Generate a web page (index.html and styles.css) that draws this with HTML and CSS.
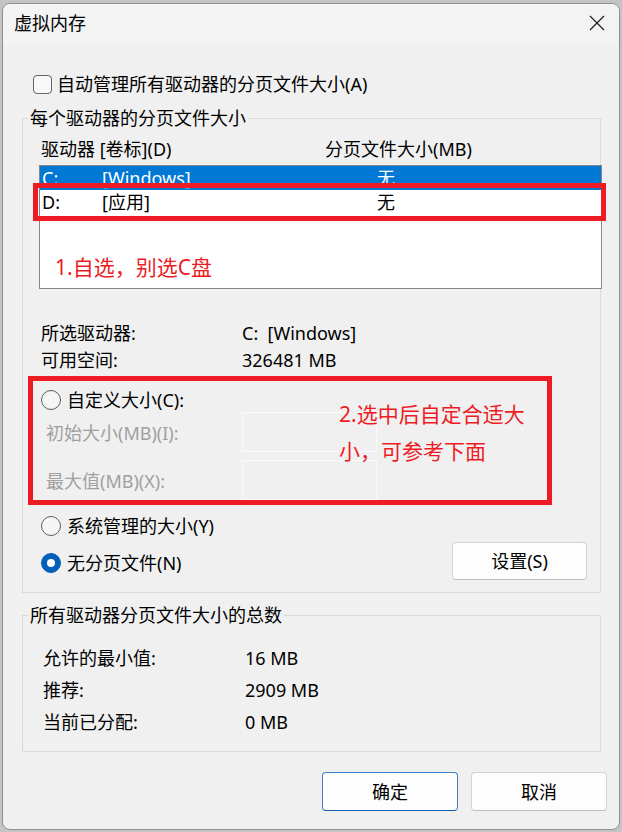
FILE: index.html
```html
<!DOCTYPE html>
<html lang="zh-CN">
<head>
<meta charset="utf-8">
<title>虚拟内存</title>
<link rel="stylesheet" href="styles.css">
</head>
<body>
<div class="window">
  <div class="titlebar">
    <span class="title">虚拟内存</span>
    <svg class="close" width="16" height="16" viewBox="0 0 16 16"><path d="M1 1L15 15M15 1L1 15" stroke="#1b1b1b" stroke-width="1.15" fill="none"/></svg>
  </div>
  <div class="content">
    <div class="check-row"><span class="checkbox"></span><span>自动管理所有驱动器的分页文件大小(A)</span></div>

    <fieldset class="group group-drives">
      <legend>每个驱动器的分页文件大小</legend>
      <div class="list-head"><span class="head-drive">驱动器 [卷标](D)</span><span>分页文件大小(MB)</span></div>
      <div class="listbox">
        <div class="list-row selected"><span class="c-drive">C:</span><span class="c-label">[Windows]</span><span>无</span></div>
        <div class="list-row"><span class="c-drive">D:</span><span class="c-label">[应用]</span><span>无</span></div>
        <div class="note note-1">1.自选，别选C盘</div>
        <div class="mark mark-row"></div>
      </div>
      <div class="info">
        <div class="info-row"><span class="info-label">所选驱动器:</span><span>C:&nbsp; [Windows]</span></div>
        <div class="info-row"><span class="info-label">可用空间:</span><span>326481 MB</span></div>
      </div>
      <div class="custom-box">
        <div class="radio-row inner"><span class="radio"></span><span>自定义大小(C):</span></div>
        <div class="field-row"><span class="field-label">初始大小(MB)(I):</span><span class="textbox"></span></div>
        <div class="field-row"><span class="field-label">最大值(MB)(X):</span><span class="textbox"></span></div>
        <div class="note note-2">2.选中后自定合适大<br>小，可参考下面</div>
      </div>
      <div class="radio-row sys"><span class="radio"></span><span>系统管理的大小(Y)</span></div>
      <div class="radio-line">
        <div class="radio-label"><span class="radio on"></span><span>无分页文件(N)</span></div>
        <button class="btn btn-set">设置(S)</button>
      </div>
    </fieldset>

    <fieldset class="group group-total">
      <legend>所有驱动器分页文件大小的总数</legend>
      <div class="totals">
        <div class="total-row"><span class="total-label">允许的最小值:</span><span>16 MB</span></div>
        <div class="total-row"><span class="total-label">推荐:</span><span>2909 MB</span></div>
        <div class="total-row"><span class="total-label">当前已分配:</span><span>0 MB</span></div>
      </div>
    </fieldset>

    <div class="actions">
      <button class="btn btn-primary">确定</button>
      <button class="btn">取消</button>
    </div>
  </div>
</div>
</body>
</html>
```

FILE: styles.css
```css
* { box-sizing: border-box; }
html, body { margin: 0; padding: 0; }
body {
  width: 622px;
  height: 832px;
  overflow: hidden;
  background: #c4c4c4;
  font-family: "Noto Sans", "Noto Sans CJK SC", sans-serif;
  font-size: 18px;
  color: #000;
}
.window {
  margin: 3px 0 0 2px;
  width: 618px;
  height: 827px;
  background: #f0f0f0;
  border: 1px solid #8f8f8f;
  border-radius: 8px;
  overflow: hidden;
}
.titlebar {
  height: 41px;
  background: #f3f3f3;
  display: flex;
  align-items: center;
  padding: 0 14px 4px 11px;
}
.title { line-height: 24px; }
.close { margin-left: auto; }

.check-row {
  display: flex;
  align-items: center;
  gap: 5px;
  height: 24px;
  line-height: 24px;
  margin-top: 27px;
  padding-left: 30px;
}
.checkbox {
  flex: none;
  width: 19px;
  height: 19px;
  border: 1px solid #646464;
  border-radius: 4px;
  background: #f8f8f8;
}

.group {
  margin: 0 0 0 19px;
  width: 579px;
  min-width: 0;
  padding: 0;
  border: 1px solid #dadada;
}
.group legend {
  margin-left: 5px;
  padding: 0 2px;
  line-height: 24px;
}
.group-drives { margin-top: 10px; padding-bottom: 12px; }
.group-total { margin-top: 10px; padding-bottom: 13px; }

.list-head {
  display: flex;
  margin-top: 7px;
  padding-left: 18px;
  line-height: 24px;
}
.head-drive { width: 284px; }

.listbox {
  position: relative;
  margin: 4px 0 0 16px;
  width: 563px;
  height: 124px;
  background: #fff;
  border: 1px solid #868686;
}
.list-row {
  display: flex;
  height: 24px;
  line-height: 24px;
  padding-left: 2px;
}
.list-row.selected { background: #0078d4; color: #fff; }
.c-drive { width: 60px; }
.c-label { width: 275px; }

.note {
  color: #ed1c24;
  font-size: 21px;
  white-space: nowrap;
}
.note-1 {
  margin-top: 39px;
  padding-left: 15px;
  line-height: 28px;
}
.note-2 {
  position: absolute;
  left: 306px;
  top: 15px;
  line-height: 37px;
}
.mark {
  position: absolute;
  border: 5px solid #ed1c24;
}
.mark-row {
  left: -7px;
  top: 17px;
  width: 573px;
  height: 38px;
}

.info { margin-top: 31px; }
.info-row {
  display: flex;
  line-height: 27px;
  padding-left: 18px;
}
.info-label { width: 201px; }

.custom-box {
  position: relative;
  margin: 2px 0 0 5px;
  width: 524px;
  height: 129px;
  padding-top: 7px;
  border: 5px solid #ed1c24;
}
.radio-row {
  display: flex;
  align-items: center;
  gap: 6px;
  height: 24px;
  line-height: 24px;
}
.radio-row.inner { padding-left: 8px; }
.radio-row.sys { margin-top: 9px; padding-left: 18px; }
.radio {
  flex: none;
  width: 20px;
  height: 20px;
  border-radius: 50%;
  border: 1px solid #5e5e5e;
  background: #f5f5f5;
}
.radio.on {
  background: #005fb8;
  border-color: #005fb8;
  display: flex;
  align-items: center;
  justify-content: center;
}
.radio.on::after {
  content: "";
  width: 8px;
  height: 8px;
  border-radius: 50%;
  background: #fff;
}

.field-row {
  display: flex;
  align-items: center;
  height: 40px;
  padding-left: 13px;
  color: #a0a0a0;
}
.field-row + .field-row { margin-top: 8px; }
.field-label { width: 196px; }
.textbox {
  width: 135px;
  height: 40px;
  border: 1px solid #fafafa;
  background: #f0f0f0;
}

.radio-line {
  display: flex;
  align-items: center;
  height: 38px;
  margin-top: 4px;
  padding: 0 13px 0 18px;
}
.radio-label {
  display: flex;
  align-items: center;
  gap: 6px;
  line-height: 24px;
  margin-top: 4px;
}

.btn {
  font: inherit;
  color: #000;
  background: #fdfdfd;
  border: 1px solid #d3d3d3;
  border-bottom-color: #bdbdbd;
  border-radius: 4px;
  padding: 0;
  line-height: 24px;
}
.btn-set {
  margin-left: auto;
  width: 135px;
  height: 38px;
}

.totals { margin-top: 15px; }
.total-row {
  display: flex;
  line-height: 32px;
  padding-left: 20px;
}
.total-label { width: 202px; }

.actions {
  display: flex;
  justify-content: flex-end;
  gap: 13px;
  margin-top: 20px;
  padding-right: 12px;
}
.actions .btn {
  width: 136px;
  height: 39px;
}
.btn-primary {
  border-color: #3d82cc;
  border-bottom-color: #0f5fb0;
}
```
